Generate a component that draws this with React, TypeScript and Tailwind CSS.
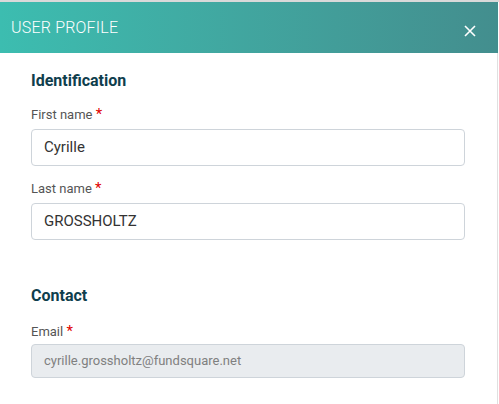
import React from 'react';

const Field = ({ label, value, disabled }: { label: string; value: string; disabled?: boolean }) => (
  <div className="flex flex-col">
    <label className={`h-5 text-[13px] leading-[20px] text-[#555] ${disabled ? 'mb-[2px]' : 'mb-1'}`}>
      {label} <span className="text-[#e00000] text-[15px] leading-none relative top-0">*</span>
    </label>
    {disabled ? (
      <div className="h-[34px] flex items-center px-3 rounded border border-[#ced4da] bg-[#e9ecef] text-[13px] text-[#808080]">
        {value}
      </div>
    ) : (
      <div className="h-[37px] flex items-center px-3 rounded border border-[#ced4da] bg-white text-[15px] text-[#333]">
        {value}
      </div>
    )}
  </div>
);

const App = () => {
  return (
    <div className="w-[499px] h-[404px] bg-white overflow-hidden" style={{ fontFamily: 'Roboto, "Liberation Sans", sans-serif' }}>
      <div className="h-[2px] bg-[#d9d9d9]" />
      <div className="w-[498px] h-[51px] flex items-center justify-between pl-[11px] pr-[22px] bg-gradient-to-r from-[#3cbdb0] to-[#438e8e]">
        <span className="text-white text-[16px] font-light tracking-[0.2px]">USER PROFILE</span>
        <svg width="12" height="12" viewBox="0 0 12 12" className="mt-[7px]">
          <path d="M1 1 L11 11 M11 1 L1 11" stroke="white" strokeWidth="1.6" />
        </svg>
      </div>
      <div className="w-[498px] h-full border-r border-[#e0e0e0] pl-[31px] pr-[32px] pt-4">
        <h3 className="text-[16px] leading-6 font-bold text-[#0f3e4d] mb-3">Identification</h3>
        <div className="flex flex-col gap-[13px]">
          <Field label="First name" value="Cyrille" />
          <Field label="Last name" value="GROSSHOLTZ" />
        </div>
        <h3 className="text-[16px] leading-6 font-bold text-[#0f3e4d] mt-[44px] mb-[14px]">Contact</h3>
        <Field label="Email" value="cyrille.grossholtz@fundsquare.net" disabled />
      </div>
    </div>
  );
};

export default App;
